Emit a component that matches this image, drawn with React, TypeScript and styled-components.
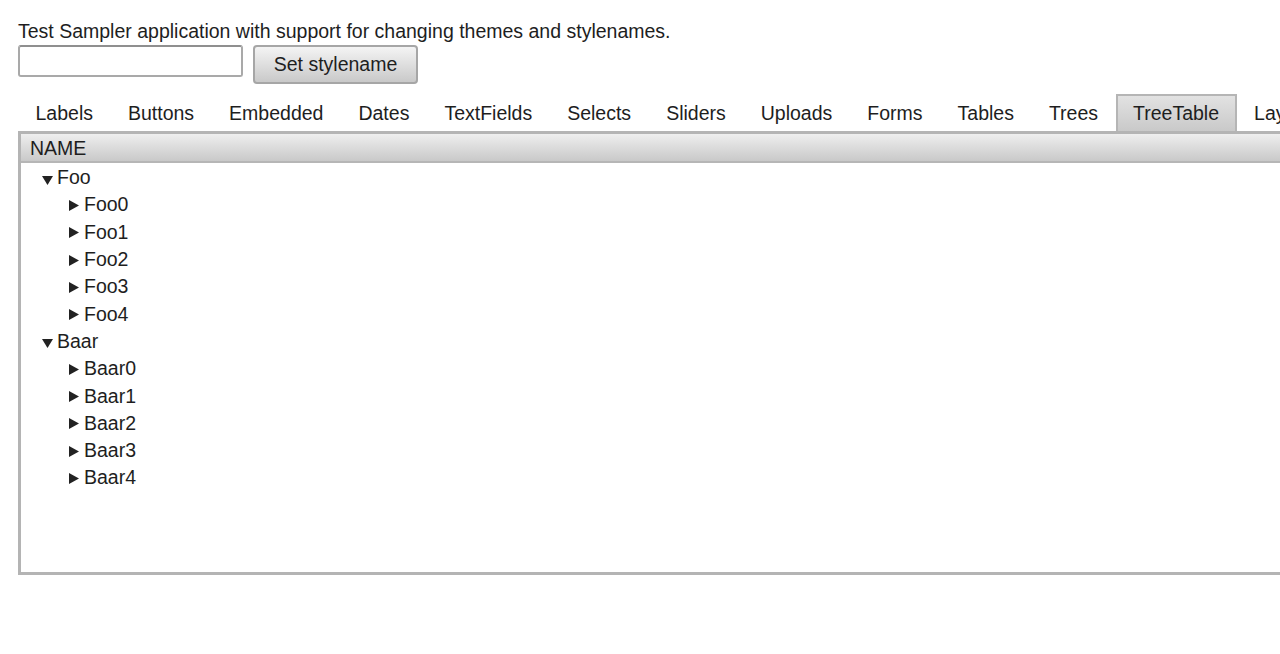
import React from "react";
import styled, { createGlobalStyle } from "styled-components";

const Global = createGlobalStyle`
  html, body { margin: 0; padding: 0; background: #fff; overflow: hidden; }
  body { font-family: "Liberation Sans", Arial, sans-serif; font-size: 19.5px; color: #1e1e1e; }
`;

const Page = styled.div`
  width: 1500px;
  padding: 20px 0 0 18px;
  box-sizing: border-box;
`;

const Intro = styled.div`
  line-height: 22px;
  height: 21px;
  white-space: nowrap;
`;

const Controls = styled.div`
  display: flex;
  align-items: flex-start;
  gap: 10px;
  margin-top: 4px;
`;

const TextInput = styled.input`
  box-sizing: border-box;
  width: 225px;
  height: 32px;
  border: 2px solid #a9a9a9;
  border-top-color: #8f8f8f;
  border-radius: 3px;
  background: #fff;
  font: inherit;
  padding: 0 6px;
  outline: none;
`;

const Button = styled.button`
  box-sizing: border-box;
  width: 165px;
  height: 39px;
  border: 2px solid #a6a6a6;
  border-radius: 4px;
  background: linear-gradient(#f4f4f4, #c9c9c9);
  font: inherit;
  color: #1e1e1e;
  padding: 0;
  cursor: pointer;
`;

const TabBar = styled.div`
  display: flex;
  margin-top: 10px;
  height: 37px;
`;

const Tab = styled.div<{ $selected?: boolean }>`
  box-sizing: border-box;
  height: 37px;
  padding: 6px 15.5px 0;
  line-height: 22px;
  white-space: nowrap;
  border: 2px solid ${(p) => (p.$selected ? "#b5b5b5" : "transparent")};
  border-bottom: none;
  background: ${(p) => (p.$selected ? "linear-gradient(#e2e2e2, #c9c9c9)" : "transparent")};
`;

const TableBox = styled.div`
  box-sizing: border-box;
  height: 444px;
  border: 3px solid #b4b4b4;
  display: flex;
  flex-direction: column;
`;

const Header = styled.div`
  height: 27px;
  border-bottom: 2px solid #b6b6b6;
  background: linear-gradient(#eeeeee, #c9c9c9);
  padding-left: 9px;
  line-height: 28px;
  flex: none;
`;

const Body = styled.div`
  padding-top: 0.5px;
`;

const Row = styled.div<{ $level: number }>`
  height: 27.3px;
  display: flex;
  align-items: center;
  padding-left: ${(p) => 21 + p.$level * 27}px;
  line-height: 22px;
`;

const Toggle = styled.span<{ $open: boolean }>`
  width: 15px;
  flex: none;
  display: flex;
  align-items: center;
  margin-top: ${(p) => (p.$open ? 6 : 2)}px;
`;

const Label = styled.span`
  white-space: nowrap;
`;

const DownArrow = () => (
  <svg width="11" height="9" viewBox="0 0 11 9">
    <polygon points="0,0 11,0 5.5,9" fill="#222" />
  </svg>
);

const RightArrow = () => (
  <svg width="10" height="11" viewBox="0 0 10 11">
    <polygon points="0,0 10,5.5 0,11" fill="#222" />
  </svg>
);

const tabs = [
  "Labels",
  "Buttons",
  "Embedded",
  "Dates",
  "TextFields",
  "Selects",
  "Sliders",
  "Uploads",
  "Forms",
  "Tables",
  "Trees",
  "TreeTable",
  "Layouts",
];

type Node = { name: string; level: number; open: boolean };

const rows: Node[] = [];
["Foo", "Baar"].forEach((root) => {
  rows.push({ name: root, level: 0, open: true });
  for (let i = 0; i < 5; i++) rows.push({ name: `${root}${i}`, level: 1, open: false });
});

export default function App() {
  return (
    <>
      <Global />
      <Page>
        <Intro>Test Sampler application with support for changing themes and stylenames.</Intro>
        <Controls>
          <TextInput type="text" />
          <Button>Set stylename</Button>
        </Controls>
        <TabBar>
          {tabs.map((t) => (
            <Tab key={t} $selected={t === "TreeTable"}>
              {t}
            </Tab>
          ))}
        </TabBar>
        <TableBox>
          <Header>NAME</Header>
          <Body>
            {rows.map((r) => (
              <Row key={r.name} $level={r.level}>
                <Toggle $open={r.open}>{r.open ? <DownArrow /> : <RightArrow />}</Toggle>
                <Label>{r.name}</Label>
              </Row>
            ))}
          </Body>
        </TableBox>
      </Page>
    </>
  );
}
